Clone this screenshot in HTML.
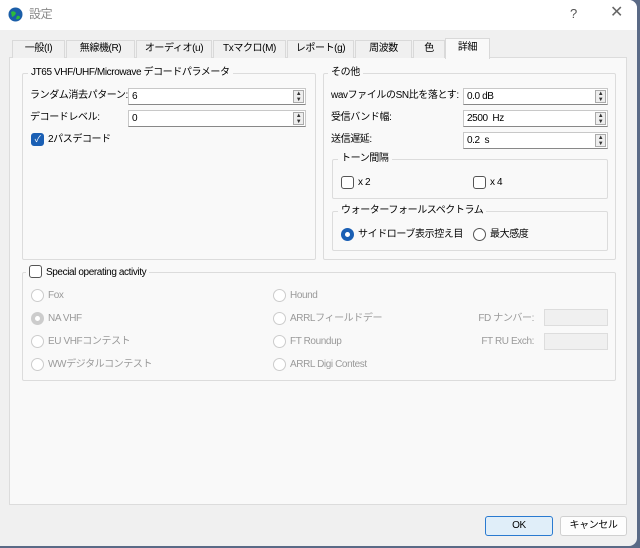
<!DOCTYPE html>
<html><head><meta charset="utf-8"><style>
*{box-sizing:border-box;margin:0;padding:0}
body{width:640px;height:548px;background:#5a6a86;font-family:"Liberation Sans","Noto Sans CJK JP",sans-serif;font-size:10px;letter-spacing:-0.4px;line-height:13px;color:#000;position:relative;overflow:hidden}
.win{position:absolute;left:0;top:0;width:637px;height:546px;background:#f0f0f0;border-radius:0 8px 8px 0;overflow:hidden}
.title{position:absolute;left:0;top:0;width:637px;height:30px;background:#fff}
.a{position:absolute;white-space:nowrap;line-height:13px}
.tab{position:absolute;top:40px;height:18px;border:1px solid #d9d9d9;border-bottom:none;background:#f0f0f0;text-align:center;line-height:16px}
.pane{position:absolute;left:9px;top:57px;width:618px;height:448px;border:1px solid #dcdcdc;background:#f9f9f9}
.grp{position:absolute;border:1px solid #dcdcdc;border-radius:2px}
.gt{position:absolute;background:#f9f9f9;padding:0 3px;line-height:13px;white-space:nowrap}
.spin{position:absolute;height:17px;background:#fff;border:1px solid #c8c8c8;border-bottom:1px solid #888;padding-left:3px;line-height:15px}
.spin i{position:absolute;right:1px;top:1px;width:11px;height:13px;border:1px solid #aaa;background:#eee;font-style:normal;font-size:6px;line-height:6px;text-align:center;color:#333}
.cb{position:absolute;width:13px;height:13px;border:1px solid #555;border-radius:3px;background:#fff}
.rb{position:absolute;width:13px;height:13px;border:1px solid #555;border-radius:50%;background:#fff}
.dis{color:#9a9a9a}
.dis .rb{border-color:#ccc}
.btn{position:absolute;height:20px;border:1px solid #d0d0d0;border-radius:3px;background:#fdfdfd;text-align:center;line-height:18px}
</style></head><body>
<div class="win">
<div class="title">
 <svg class="a" style="left:8px;top:7px" width="15" height="15" viewBox="0 0 15 15"><circle cx="7.5" cy="7.5" r="7" fill="#1b5ea8"/><path d="M3 5 Q6 3 8 6 Q7 9 4 10 Z M9 9 Q12 8 12 11 Q10 13 8 12Z" fill="#2dbb3a"/></svg>
 <div class="a" style="left:29px;top:8px;font-size:12px;color:#888">設定</div>
 <div class="a" style="left:570px;top:7px;font-size:13px;color:#555">?</div>
 <div class="a" style="left:610px;top:6px;font-size:16px;color:#666">✕</div>
</div>
<div class="pane"></div>
<div class="tab" style="left:12px;width:53px">一般(I)</div>
<div class="tab" style="left:66px;width:69px">無線機(R)</div>
<div class="tab" style="left:136px;width:76px">オーディオ(u)</div>
<div class="tab" style="left:213px;width:73px">Txマクロ(M)</div>
<div class="tab" style="left:287px;width:67px">レポート(g)</div>
<div class="tab" style="left:355px;width:57px">周波数</div>
<div class="tab" style="left:413px;width:32px">色</div>
<div class="tab" style="left:445px;width:45px;top:38px;height:21px;background:#f9f9f9;line-height:18px">詳細</div>

<div class="grp" style="left:22px;top:73px;width:294px;height:187px"></div>
<div class="gt" style="left:28px;top:66px">JT65 VHF/UHF/Microwave デコードパラメータ</div>
<div class="a" style="left:30px;top:89px">ランダム消去パターン:</div>
<div class="spin" style="left:128px;top:88px;width:178px">6<i>▲<br>▼</i></div>
<div class="a" style="left:30px;top:111px">デコードレベル:</div>
<div class="spin" style="left:128px;top:110px;width:178px">0<i>▲<br>▼</i></div>
<div class="cb" style="left:31px;top:133px;background:#1a5fb4;border-color:#1a5fb4;color:#fff;font-size:9px;line-height:11px;text-align:center">✓</div>
<div class="a" style="left:48px;top:133px">2パスデコード</div>

<div class="grp" style="left:323px;top:73px;width:293px;height:187px"></div>
<div class="gt" style="left:328px;top:66px">その他</div>
<div class="a" style="left:331px;top:89px">wavファイルのSN比を落とす:</div>
<div class="spin" style="left:463px;top:88px;width:145px">0.0 dB<i>▲<br>▼</i></div>
<div class="a" style="left:331px;top:111px">受信バンド幅:</div>
<div class="spin" style="left:463px;top:110px;width:145px">2500 &nbsp;Hz<i>▲<br>▼</i></div>
<div class="a" style="left:331px;top:133px">送信遅延:</div>
<div class="spin" style="left:463px;top:132px;width:145px">0.2 &nbsp;s<i>▲<br>▼</i></div>
<div class="grp" style="left:332px;top:159px;width:276px;height:40px"></div>
<div class="gt" style="left:338px;top:152px">トーン間隔</div>
<div class="cb" style="left:341px;top:176px"></div><div class="a" style="left:358px;top:176px">x 2</div>
<div class="cb" style="left:473px;top:176px"></div><div class="a" style="left:490px;top:176px">x 4</div>
<div class="grp" style="left:332px;top:211px;width:276px;height:40px"></div>
<div class="gt" style="left:338px;top:204px">ウォーターフォールスペクトラム</div>
<div class="rb" style="left:341px;top:228px;border:4px solid #1a5fb4"></div><div class="a" style="left:358px;top:228px">サイドローブ表示控え目</div>
<div class="rb" style="left:473px;top:228px"></div><div class="a" style="left:490px;top:228px">最大感度</div>

<div class="grp" style="left:22px;top:272px;width:594px;height:109px"></div>
<div class="gt" style="left:26px;top:265px;padding-left:3px"><span class="cb" style="position:relative;display:inline-block;vertical-align:-3px;margin-right:4px"></span>Special operating activity</div>
<div class="dis">
<div class="rb" style="left:31px;top:289px"></div><div class="a" style="left:48px;top:289px">Fox</div>
<div class="rb" style="left:31px;top:312px;border:4px solid #ccc"></div><div class="a" style="left:48px;top:312px">NA VHF</div>
<div class="rb" style="left:31px;top:335px"></div><div class="a" style="left:48px;top:335px">EU VHFコンテスト</div>
<div class="rb" style="left:31px;top:358px"></div><div class="a" style="left:48px;top:358px">WWデジタルコンテスト</div>
<div class="rb" style="left:273px;top:289px"></div><div class="a" style="left:290px;top:289px">Hound</div>
<div class="rb" style="left:273px;top:312px"></div><div class="a" style="left:290px;top:312px">ARRLフィールドデー</div>
<div class="rb" style="left:273px;top:335px"></div><div class="a" style="left:290px;top:335px">FT Roundup</div>
<div class="rb" style="left:273px;top:358px"></div><div class="a" style="left:290px;top:358px">ARRL Digi Contest</div>
<div class="a" style="right:103px;top:312px">FD ナンバー:</div>
<div class="a" style="right:103px;top:335px">FT RU Exch:</div>
</div>
<div class="a" style="left:544px;top:309px;width:64px;height:17px;border:1px solid #ddd;background:#f0f0f0"></div>
<div class="a" style="left:544px;top:333px;width:64px;height:17px;border:1px solid #ddd;background:#f0f0f0"></div>

<div class="btn" style="left:485px;top:516px;width:68px;background:#e0eef9;border:1px solid #2a7ad0">OK</div>
<div class="btn" style="left:560px;top:516px;width:67px">キャンセル</div>
</div>
</body></html>
